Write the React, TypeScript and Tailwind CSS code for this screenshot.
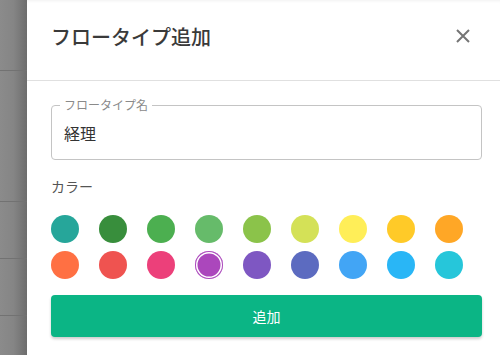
import React from "react";

const colors = [
  "#26a69a", "#388e3c", "#4caf50", "#66bb6a", "#8bc34a", "#d4e157", "#ffee58", "#ffca28", "#ffa726",
  "#ff7043", "#ef5350", "#ec407a", "#ab47bc", "#7e57c2", "#5c6bc0", "#42a5f5", "#29b6f6", "#26c6da",
];

export default function App() {
  return (
    <div
      className="flex h-[355px] w-[500px] overflow-hidden bg-white"
      style={{ fontFamily: '"Noto Sans CJK JP", "Noto Sans", sans-serif' }}
    >
      <div className="flex w-[27px] shrink-0 flex-col bg-gradient-to-r from-[#8b8b8b] via-[#858585] to-[#6d6d6d]">
        <div className="h-[71px] border-b border-[#727272]" />
        <div className="h-[131px] border-b border-[#727272]" />
        <div className="h-[57px] border-b border-[#727272]" />
        <div className="h-[57px] border-b border-[#727272]" />
        <div className="flex-1" />
      </div>
      <div className="flex min-w-0 flex-1 flex-col bg-white shadow-[inset_0_3px_3px_-2px_rgba(0,0,0,0.06)]">
        <div className="flex h-[81px] items-center justify-between border-b border-[#e0e0e0] pb-[6px] pl-6 pr-[30px]">
          <h1 className="text-[20px] font-medium leading-none text-[#3a3a3a]">フロータイプ追加</h1>
          <svg width="14" height="14" viewBox="0 0 14 14" className="mt-[-2px]">
            <path d="M1 1L13 13M13 1L1 13" stroke="#757575" strokeWidth="2" />
          </svg>
        </div>
        <div className="flex flex-col px-6 pt-6">
          <div className="relative h-[55px] w-[431px] rounded border border-[#c4c4c4]">
            <span className="absolute left-[8px] top-[-8px] bg-white px-1 text-[12px] leading-[14px] text-[#8a8a8a]">
              フロータイプ名
            </span>
            <div className="flex h-full items-center pl-3 text-[16px] text-[#333333]">経理</div>
          </div>
          <div className="mt-4 text-[14px] leading-5 text-[#555555]">カラー</div>
          <div className="mt-[19px] grid w-[412px] grid-cols-9 gap-x-[20px] gap-y-[8px]">
            {colors.map((c, i) => (
              <div
                key={c}
                className={
                  i === 12
                    ? "h-[28px] w-[28px] rounded-full shadow-[inset_0_0_0_1px_#ab47bc,inset_0_0_0_2.5px_#ffffff]"
                    : "h-[28px] w-[28px] rounded-full"
                }
                style={{ backgroundColor: c }}
              />
            ))}
          </div>
          <button className="mt-4 flex h-[42px] w-[431px] items-center justify-center rounded bg-[#0bb585] text-[14px] text-white shadow-[0_2px_3px_rgba(0,0,0,0.2)]">
            追加
          </button>
        </div>
      </div>
    </div>
  );
}
